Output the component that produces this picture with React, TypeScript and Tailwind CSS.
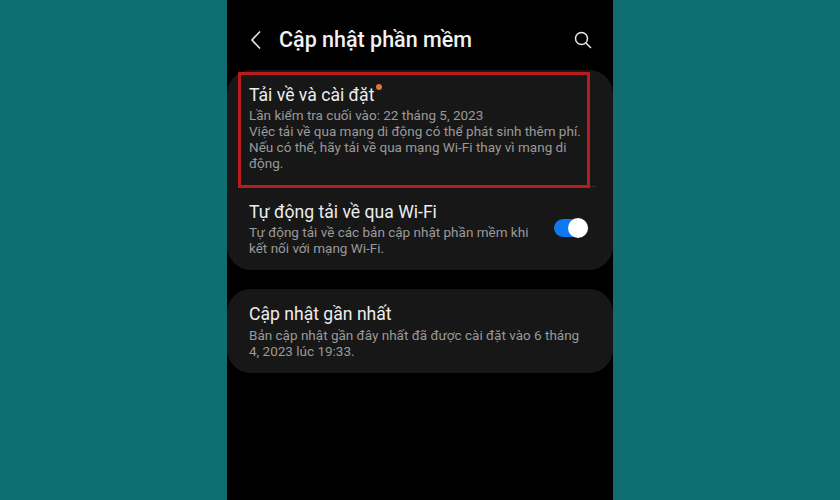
export default function App() {
  const font = { fontFamily: 'Roboto, "Noto Sans", sans-serif' };
  return (
    <div className="w-[840px] h-[500px] overflow-hidden flex justify-center bg-[#0f6e72]" style={font}>
      <div className="w-[386px] h-full bg-black flex flex-col">
        <div className="h-[70px] shrink-0 flex items-center pt-[9px] pl-[23px] pr-[21px]">
          <svg width="12" height="20" viewBox="0 0 12 20" fill="none" stroke="#e8e8e8" strokeWidth="1.6" className="mr-[17px]">
            <path d="M10 1.5 L2 10 L10 18.5" />
          </svg>
          <span className="text-[21.5px] leading-[28px] font-medium text-[#f2f2f2] flex-1">Cập nhật phần mềm</span>
          <svg width="18" height="18" viewBox="0 0 18 18" fill="none" stroke="#e8e8e8" strokeWidth="1.5">
            <circle cx="7.5" cy="7.5" r="6" />
            <path d="M12 12 L17 17" />
          </svg>
        </div>

        <div className="relative h-[200px] shrink-0 rounded-[24px] bg-[#171717] pl-[22px] pr-[24px]">
          <div className="pt-[13px] h-[120px]">
            <div className="relative w-fit text-[17.6px] leading-[24px] text-[#ededed]">
              Tải về và cài đặt
              <span className="absolute -right-[8px] top-[1px] w-[6px] h-[6px] rounded-full bg-[#e0733a]" />
            </div>
            <div className="text-[13.5px] leading-[16px] text-[#9a9a9a] whitespace-nowrap">
              <div>Lần kiểm tra cuối vào: 22 tháng 5, 2023</div>
              <div>Việc tải về qua mạng di động có thể phát sinh thêm phí.</div>
              <div>Nếu có thể, hãy tải về qua mạng Wi-Fi thay vì mạng di</div>
              <div>động.</div>
            </div>
          </div>
          <div className="flex items-start justify-between pt-[10px]">
            <div>
              <div className="text-[17.6px] leading-[24px] text-[#ededed]">Tự động tải về qua Wi-Fi</div>
              <div className="text-[13.5px] leading-[16px] text-[#9a9a9a] whitespace-nowrap">
                <div>Tự động tải về các bản cập nhật phần mềm khi</div>
                <div>kết nối với mạng Wi-Fi.</div>
              </div>
            </div>
            <div className="relative w-[34px] h-[18px] mt-[19px] mr-[1px] rounded-full bg-[#0f78f0] shrink-0">
              <span className="absolute right-0 -top-[1px] w-[20px] h-[20px] rounded-full bg-white" />
            </div>
          </div>
          <span className="absolute left-[363px] top-[116px] w-[6px] h-px bg-[#333333]" />
          <div className="absolute left-[11px] top-[2px] w-[352px] h-[116px] border-[3.5px] border-[#b81c1c]" />
        </div>

        <div className="h-[84px] mt-[19px] shrink-0 rounded-[24px] bg-[#171717] pl-[22px] pr-[24px] pt-[13px]">
          <div className="text-[17.6px] leading-[24px] text-[#ededed]">Cập nhật gần nhất</div>
          <div className="text-[13.5px] leading-[16px] text-[#9a9a9a] mt-[1px] whitespace-nowrap">
            <div>Bản cập nhật gần đây nhất đã được cài đặt vào 6 tháng</div>
            <div>4, 2023 lúc 19:33.</div>
          </div>
        </div>
      </div>
    </div>
  );
}
